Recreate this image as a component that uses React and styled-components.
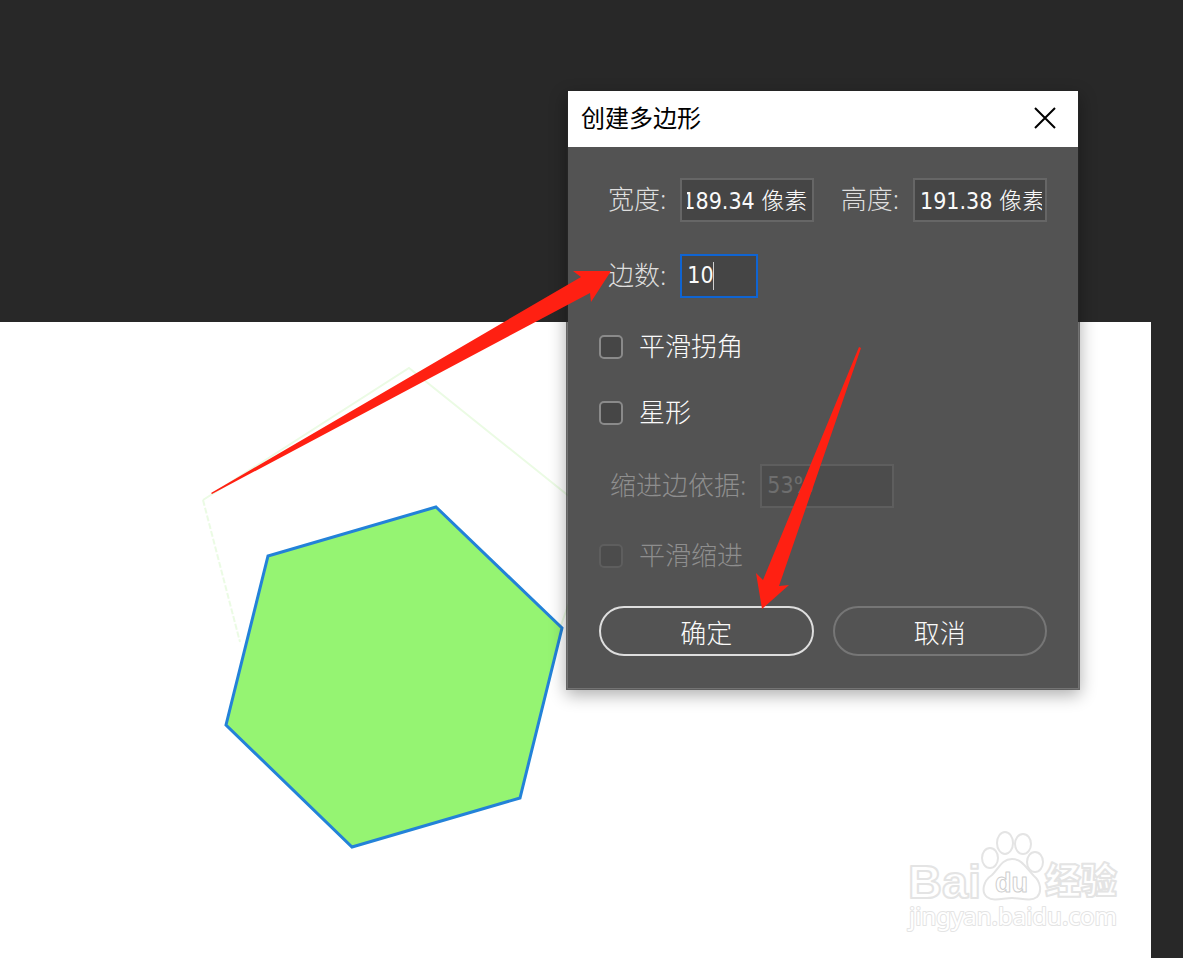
import React, { useEffect, useRef } from 'react';
import styled, { createGlobalStyle } from 'styled-components';

const GlobalStyle = createGlobalStyle`
  *, *::before, *::after {
    box-sizing: border-box;
  }

  body {
    margin: 0;
    background: #282828;
    font-family: 'Noto Sans', 'Noto Sans CJK SC', sans-serif;
  }
`;

const Workspace = styled.main`
  position: relative;
  min-height: 100vh;
  padding: 322px 32px 0 0;
  display: flex;
  background: #282828;
  overflow: hidden;
`;

const Artboard = styled.section`
  flex: 1;
  display: flex;
  flex-direction: column;
  justify-content: flex-end;
  align-items: flex-end;
  padding: 0 30px 24px 0;
  background: #fff;
`;

const Overlay = styled.svg`
  position: absolute;
  top: 0;
  left: 0;
  pointer-events: none;
`;

const Dialog = styled.form`
  position: absolute;
  top: 91px;
  left: 566px;
  width: 514px;
  border: 2px solid rgba(36, 36, 36, 0.64);
  border-top: 0;
  background: #535353;
  background-clip: padding-box;
  box-shadow: 0 5px 16px rgba(0, 0, 0, 0.32);
`;

const TitleBar = styled.header`
  display: flex;
  align-items: center;
  justify-content: space-between;
  height: 56px;
  padding: 0 20px 2px 13px;
  background: #fff;
`;

const Title = styled.h1`
  margin: 0;
  color: #000;
  font-size: 24px;
  font-weight: 400;
  line-height: 32px;
`;

const CloseButton = styled.button`
  display: flex;
  padding: 2px;
  border: 0;
  background: none;
`;

const Body = styled.div`
  display: flex;
  flex-direction: column;
  padding: 31px 31px 32px;
`;

const Row = styled.div`
  display: flex;
  align-items: center;
  justify-content: space-between;
  height: 44px;
  margin-bottom: ${({ $gap }) => $gap || 0}px;
`;

const Field = styled.div`
  position: relative;
  display: flex;
  align-items: center;
  gap: 14px;
  padding-left: ${({ $indent }) => $indent || 0}px;
`;

const Label = styled.label`
  padding-bottom: 2px;
  color: ${({ $dim, $bright }) => ($dim ? '#8e8e8e' : $bright ? '#fafafa' : '#dedede')};
  font-size: 26px;
  font-weight: 300;
  line-height: 32px;
  white-space: nowrap;
`;

const TextInput = styled.input`
  width: ${({ $short }) => ($short ? 78 : 134)}px;
  height: 44px;
  padding: 0 ${({ $scrolled }) => ($scrolled ? 5 : 3)}px 2px 5px;
  border: 2px solid #666;
  border-radius: 0;
  outline: 0;
  background: #454545;
  color: #fafafa;
  caret-color: transparent;
  font-family: 'DejaVu Sans Condensed', 'Noto Sans CJK SC', sans-serif;
  font-size: 23px;
  font-weight: 300;

  &:focus {
    border-color: #0f64d2;
  }

  &:disabled {
    border-color: #5e5e5e;
    background: #4c4c4c;
    color: #6e6e6e;
  }
`;

const Caret = styled.span`
  position: absolute;
  right: 44px;
  width: 1px;
  height: 28px;
  background: #d0d0d0;
`;

const CheckRow = styled.div`
  display: flex;
  align-items: center;
  gap: 16px;
  height: 36px;
  margin-bottom: ${({ $gap }) => $gap}px;
`;

const Checkbox = styled.input`
  appearance: none;
  width: 24px;
  height: 24px;
  margin: 0;
  border: 2px solid #8a8a8a;
  border-radius: 5px;
  background: #464646;

  &:disabled {
    border-color: #5e5e5e;
    background: #4c4c4c;
  }
`;

const Actions = styled.div`
  display: flex;
  gap: 19px;
`;

const Button = styled.button`
  flex: 1;
  height: 50px;
  padding: 2px 0 0;
  border: 2px solid ${({ $primary }) => ($primary ? '#dedede' : '#767676')};
  border-radius: 25px;
  background: transparent;
  color: #fafafa;
  font-family: 'Noto Sans', 'Noto Sans CJK SC', sans-serif;
  font-size: 26px;
  font-weight: 300;
`;

function Shapes() {
  return (
    <Overlay width="1183" height="958" aria-hidden="true">
      <g fill="none" stroke="#ebfbe4" strokeWidth="2">
        <path d="M203 500L409 368L570 497M560 628L570 600" />
        <path d="M203 500L240 642" strokeDasharray="6 2" />
      </g>
      <polygon
        points="436,507 562,628 520,798 352,847 226,725 268,556"
        fill="#95f472"
        stroke="#2382d8"
        strokeWidth="3"
      />
    </Overlay>
  );
}

function Arrows() {
  return (
    <Overlay width="1183" height="958" aria-hidden="true">
      <g fill="#ff2012">
        <polygon points="211,493 581,277 573,271 611,271 591,302 590,293 212,494" />
        <polygon points="859,347 763,580 756,573 762,609 789,585 779,586 861,348" />
      </g>
    </Overlay>
  );
}

function Watermark() {
  return (
    <svg width="216" height="104" viewBox="905 830 216 104" role="img" aria-label="Baidu">
      <g
        fill="#fff"
        stroke="#e4e4e4"
        strokeWidth="2"
        strokeLinejoin="round"
        fontFamily="'Liberation Sans', 'Noto Sans CJK SC', sans-serif"
      >
        <text x="908" y="898" fontSize="47" fontWeight="700">Bai</text>
        <ellipse cx="990" cy="858" rx="8" ry="10" />
        <ellipse cx="1005" cy="843" rx="8" ry="11" />
        <ellipse cx="1023" cy="844" rx="8" ry="10" />
        <ellipse cx="1035" cy="862" rx="8" ry="10" />
        <path d="M1012 859C1002 859 999 868 992 875C983 881 981 892 987 897C994 902 1003 898 1012 898C1021 898 1030 902 1037 897C1042 892 1041 882 1034 876C1026 868 1022 859 1012 859Z" />
        <text x="995" y="892" fontSize="27" fontWeight="700" strokeWidth="1" stroke="#cfcfcf">du</text>
        <text x="1045" y="894" fontSize="36" fontWeight="900">经验</text>
        <text x="909" y="925" fontSize="24" fontFamily="'Noto Sans', sans-serif" paintOrder="stroke">jingyan.baidu.com</text>
      </g>
    </svg>
  );
}

function App() {
  const widthRef = useRef(null);

  // keep the end of the width value in view
  useEffect(() => {
    const input = widthRef.current;
    input.scrollLeft = input.scrollWidth;
  }, []);

  return (
    <Workspace>
      <GlobalStyle />
      <Artboard>
        <Watermark />
      </Artboard>
      <Shapes />
      <Dialog>
        <TitleBar>
          <Title>创建多边形</Title>
          <CloseButton type="button" aria-label="关闭">
            <svg width="22" height="22" viewBox="0 0 22 22" stroke="#000" strokeWidth="2">
              <path d="M1 1L21 21M21 1L1 21" />
            </svg>
          </CloseButton>
        </TitleBar>
        <Body>
          <Row $gap={32}>
            <Field $indent={9}>
              <Label htmlFor="width">宽度:</Label>
              <TextInput id="width" ref={widthRef} $scrolled defaultValue="189.34 像素" />
            </Field>
            <Field>
              <Label htmlFor="height">高度:</Label>
              <TextInput id="height" defaultValue="191.38 像素" />
            </Field>
          </Row>
          <Row $gap={31}>
            <Field $indent={9}>
              <Label htmlFor="sides">边数:</Label>
              <TextInput id="sides" $short defaultValue="10" autoFocus />
              <Caret />
            </Field>
          </Row>
          <CheckRow $gap={30}>
            <Checkbox id="corners" type="checkbox" />
            <Label htmlFor="corners" $bright>平滑拐角</Label>
          </CheckRow>
          <CheckRow $gap={33}>
            <Checkbox id="star" type="checkbox" />
            <Label htmlFor="star" $bright>星形</Label>
          </CheckRow>
          <Row $gap={30}>
            <Field $indent={11}>
              <Label htmlFor="indent" $dim>缩进边依据:</Label>
              <TextInput id="indent" defaultValue="53%" disabled />
            </Field>
          </Row>
          <CheckRow $gap={32}>
            <Checkbox id="smooth" type="checkbox" disabled />
            <Label htmlFor="smooth" $dim>平滑缩进</Label>
          </CheckRow>
          <Actions>
            <Button type="button" $primary>确定</Button>
            <Button type="button">取消</Button>
          </Actions>
        </Body>
      </Dialog>
      <Arrows />
    </Workspace>
  );
}

export default App;
